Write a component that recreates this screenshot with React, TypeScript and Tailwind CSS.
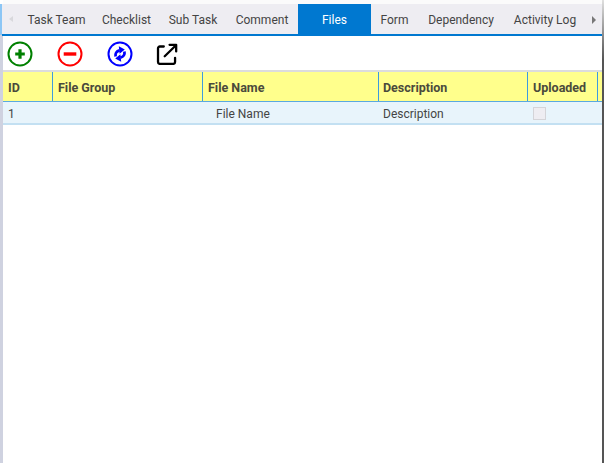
const tabs = [
  { label: "Task Team", w: "w-[73px]" },
  { label: "Checklist", w: "w-[67px]" },
  { label: "Sub Task", w: "w-[66px]" },
  { label: "Comment", w: "w-[72px]" },
  { label: "Files", w: "w-[73px]", active: true },
  { label: "Form", w: "w-[47px]" },
  { label: "Dependency", w: "w-[86px]" },
  { label: "Activity Log", w: "w-[82px]" },
];

const cols = [
  { label: "ID", w: "w-[50px]", pad: "pl-[5px]" },
  { label: "File Group", w: "w-[150px]", pad: "pl-[5px]" },
  { label: "File Name", w: "w-[176px]", pad: "pl-[5px]" },
  { label: "Description", w: "w-[149px]", pad: "pl-[4px]" },
  { label: "Uploaded", w: "w-[70px]", pad: "pl-[5px]" },
];

function Ring({ color, children }: { color: string; children: React.ReactNode }) {
  return (
    <svg width="26" height="26" viewBox="0 0 26 26" fill="none">
      <circle cx="13" cy="13" r="11.5" stroke={color} strokeWidth="2" />
      {children}
    </svg>
  );
}

export default function App() {
  return (
    <div className="w-[604px] h-[463px] bg-white flex overflow-hidden font-['Roboto',sans-serif] text-[#444]">
      <div className="w-[3px] flex flex-col shrink-0">
        <div className="h-1 bg-white" />
        <div className="h-[31px] w-[2px] bg-[#8cc6f5]" />
        <div className="flex-1 bg-[#cfd2e0]" />
      </div>
      <div className="flex-1 min-w-0 flex flex-col">
        <div className="h-1 bg-[#fbfbfb]" />
        <div className="-ml-px h-[32px] bg-[#eeedf2] border-b-2 border-[#0078d0] flex items-stretch text-[12px]">
          <div className="w-[18px] flex items-center justify-center">
            <div className="w-0 h-0 border-y-[3px] border-y-transparent border-r-[4px] border-r-[#d8d8dc]" />
          </div>
          {tabs.map((t) => (
            <div
              key={t.label}
              className={`${t.w} flex items-center justify-center pt-[2px] whitespace-nowrap ${t.active ? "bg-[#0078d0] text-white" : ""}`}
            >
              {t.label}
            </div>
          ))}
          <div className="flex-1 flex items-center justify-center pt-[2px]">
            <div className="w-0 h-0 border-y-[4px] border-y-transparent border-l-[4px] border-l-[#777]" />
          </div>
        </div>
        <div className="h-[36px] flex items-center pl-[4px] pt-[2px] border-b-2 border-[#dcdcdc]">
          <div className="w-[50px]">
            <Ring color="#008000">
              <path d="M13 8.2v9.6M8.2 13h9.6" stroke="#008000" strokeWidth="3.2" />
            </Ring>
          </div>
          <div className="w-[50px]">
            <Ring color="#ff0000">
              <path d="M6.7 13h12.6" stroke="#ff0000" strokeWidth="3.4" />
            </Ring>
          </div>
          <div className="w-[50px]">
            <Ring color="#0000ff">
              <path d="M8.6 15.5c-.6-2.8.8-5.4 4-6.2" stroke="#0000ff" strokeWidth="2.8" />
              <path d="M17.4 10.5c.6 2.8-.8 5.4-4 6.2" stroke="#0000ff" strokeWidth="2.8" />
              <path d="M11.8 5.2l6 3.2-5.2 4.4zM14.2 20.8l-6-3.2 5.2-4.4z" fill="#0000ff" />
            </Ring>
          </div>
          <svg className="-ml-px" width="22" height="22" viewBox="0 0 24 24" fill="none" stroke="#000" strokeWidth="2.5" strokeLinecap="round" strokeLinejoin="round">
            <path d="M8.5 3.8H4.2a2 2 0 0 0-2 2v15a2 2 0 0 0 2 2h14.6a2 2 0 0 0 2-2v-4.6" />
            <path d="M9.5 14.5L21.8 2.4M14.8 2h7.2v7.2" />
          </svg>
        </div>
        <div className="h-[30px] bg-[#ffff8c] flex border-b border-[#5aa9e0] font-bold text-[12.5px] text-[#4a4a3c]">
          {cols.map((c) => (
            <div key={c.label} className={`${c.w} ${c.pad} flex items-center pt-[3px] border-r border-[#3d9be0] whitespace-nowrap`}>
              {c.label}
            </div>
          ))}
        </div>
        <div className="h-[23px] bg-[#e8f4fb] flex border-b-2 border-[#c3e0f2] text-[12px]">
          <div className="w-[50px] pl-[5px] flex items-center pt-[2px]">1</div>
          <div className="w-[150px]" />
          <div className="w-[176px] pl-[13px] flex items-center pt-[2px]">File Name</div>
          <div className="w-[149px] pl-[4px] flex items-center pt-[2px]">Description</div>
          <div className="w-[70px] pl-[5px] flex items-center pt-[2px]">
            <div className="w-[13px] h-[13px] bg-[#eeedf2] border border-[#d4d4d8]" />
          </div>
        </div>
        <div className="flex-1 bg-white" />
      </div>
      <div className="w-[2px] shrink-0 flex flex-col">
        <div className="h-[60px] bg-gradient-to-b from-[#e0e0e0] to-[#555]" />
        <div className="flex-1 bg-[#555]" />
      </div>
    </div>
  );
}
